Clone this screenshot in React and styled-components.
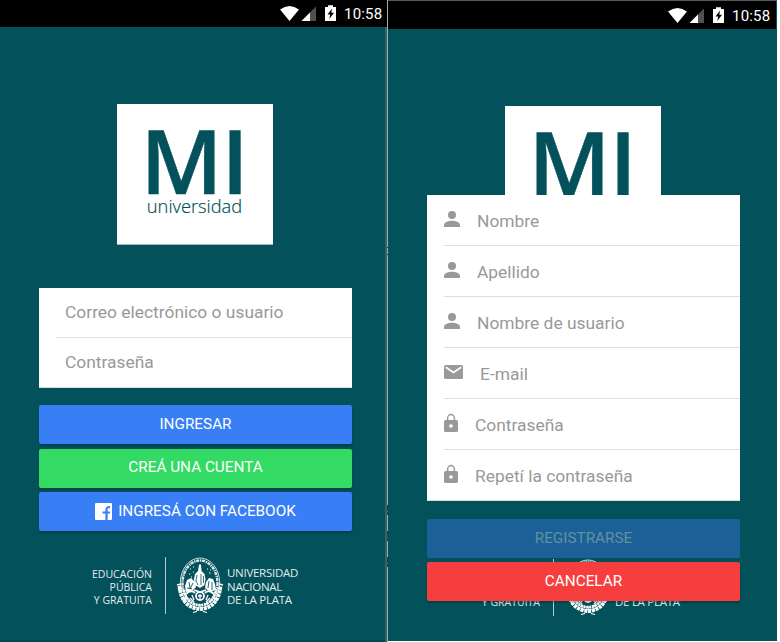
import React from "react";
import styled, { createGlobalStyle, css } from "styled-components";

const TEAL = "#03515a";

const GlobalStyle = createGlobalStyle`
  * { box-sizing: border-box; }
  body { margin: 0; background: #fff; font-family: Roboto, "Liberation Sans", sans-serif; overflow: hidden; }
`;

const Board = styled.main`
  display: grid;
  grid-template-columns: 385px 3px 389px;
  width: 777px;
  height: 642px;
  background: ${TEAL};
`;

const Phone = styled.section`
  display: grid;
  grid-template-rows: 27px 1fr;
  height: ${(p) => (p.$framed ? 641 : 642)}px;
  min-width: 0;
  background: ${TEAL};
  ${(p) =>
    p.$framed
      ? css`
          border-top: 1px solid #55595a;
          grid-template-rows: 28px 1fr;
          box-shadow: 0 1px #fff;
        `
      : css`
          border-bottom: 2px solid #06454d;
        `}
`;

const Divider = styled.div`
  display: grid;
  grid-template-columns: 2px 1px;
  background: linear-gradient(#000 27px, #34656b 27px);
`;

const DividerLine = styled.svg`
  grid-column: 2;
  width: 1px;
  height: 642px;
`;

const StatusBar = styled.header`
  display: flex;
  justify-content: flex-end;
  align-items: ${(p) => (p.$framed ? "flex-end" : "flex-start")};
  width: 388px;
  padding-right: 6px;
  background: #000;
`;

const StatusIcons = styled.svg`
  width: 60px;
  height: 27px;
`;

const Clock = styled.time`
  width: 42px;
  padding: 1px 0 0 4px;
  color: #fff;
  font-size: 15px;
  line-height: 27px;
  height: 27px;
  white-space: nowrap;
  letter-spacing: 0.2px;
`;

const Screen = styled.div`
  display: grid;
  grid-template-areas: "stack";
  grid-template-columns: 388px;
  min-height: 0;
`;

const Backdrop = styled.div`
  grid-area: stack;
  display: flex;
  flex-direction: column;
  align-items: center;
  padding-top: 77px;
  padding-right: 1px;
`;

const Logo = styled.div`
  display: flex;
  flex-direction: column;
  align-items: center;
  width: 156px;
  height: 141px;
  margin-left: 3px;
  border-bottom: 1px solid #9bb9bd;
  background: #fff;
  color: ${TEAL};
  font-family: "Open Sans", sans-serif;
`;

const LogoMark = styled.div`
  height: 91px;
  margin-right: 2px;
  font-size: 89px;
  font-weight: 600;
  line-height: 112px;
  letter-spacing: -1px;
  -webkit-text-stroke: 0.5px ${TEAL};
`;

const LogoName = styled.div`
  font-size: 18.3px;
  font-weight: 300;
  line-height: 22px;
  margin-right: 1px;
  -webkit-text-stroke: 0.2px ${TEAL};
`;

const Sponsor = styled.footer`
  display: flex;
  align-items: flex-start;
  margin-top: 312px;
  margin-left: 1px;
  color: #e2eced;
`;

const Slogan = styled.p`
  width: 63px;
  margin: 11px 13px 0 0;
  font: 400 10.5px/13px "Open Sans", sans-serif;
  text-align: right;
  white-space: nowrap;
`;

const Rule = styled.span`
  width: 1px;
  height: 57px;
  background: #b4cbce;
`;

const Seal = styled.svg`
  width: 48px;
  height: 58px;
  margin-left: 10px;
`;

const University = styled.p`
  width: 72px;
  margin: 9px 0 0 3px;
  font: 400 11.5px/13.5px "Open Sans", sans-serif;
  letter-spacing: -0.28px;
  white-space: nowrap;
`;

const Form = styled.form`
  grid-area: stack;
  z-index: 1;
  width: 313px;
  height: max-content;
  margin: ${(p) => p.$top}px 0 0 39px;
`;

const Fields = styled.div`
  padding-left: 17px;
  background: #fff;
  box-shadow: inset 0 -1px #d5dcdd;
`;

const Actions = styled.div`
  display: grid;
  gap: ${(p) => p.$gap}px;
  padding-top: ${(p) => p.$top}px;
`;

const Field = styled.label`
  display: flex;
  align-items: center;
  height: ${(p) => p.$height}px;
  padding-left: ${(p) => p.$indent}px;
  padding-top: ${(p) => (p.$indent ? 0 : 2)}px;
  padding-bottom: ${(p) => (p.$indent ? 2 : 0)}px;
  color: #999;
  font-size: 17.4px;
  border-bottom: 1px solid #dedede;
`;

const FieldIcon = styled.svg`
  flex: none;
  width: ${(p) => p.$width}px;
  height: 22px;
  margin: 0 ${(p) => p.$gap}px 4px 0;
  fill: #999;
`;

const Button = styled.button`
  display: flex;
  align-items: center;
  justify-content: center;
  width: 100%;
  height: 39px;
  padding: 0 0 2px;
  border: 0;
  border-radius: 2px;
  background: ${(p) => p.$color};
  color: ${(p) => p.$ink || "#fff"};
  font: 400 15.3px Roboto, sans-serif;
  box-shadow: ${(p) => (p.disabled ? "none" : "0 2px 2px rgba(0, 0, 0, 0.22)")};
`;

const FacebookIcon = styled.svg`
  width: 17px;
  height: 17px;
  margin: 1px 6px 0 0;
`;

const SHAPES = {
  person: (
    <>
      <circle cx="8" cy="7" r="4" />
      <path d="M0 19v-2c0-3 5-4.300 8-4.300s8 1.300 8 4.300v2z" />
    </>
  ),
  mail: (
    <>
      <rect y="4" width="19" height="14" rx="1.5" />
      <path d="M1.800 6.200l7.700 5.200 7.700-5.200" fill="none" stroke="#fff" strokeWidth="1.7" />
    </>
  ),
  lock: (
    <>
      <path d="M3.600 9V6.200a3.400 3.600 0 0 1 6.800 0V9" fill="none" stroke="#999" strokeWidth="1.5" />
      <rect y="8" width="14" height="12" rx="1.6" />
      <circle cx="7" cy="14" r="1.8" fill="#fff" />
    </>
  ),
};

const ICON_SIZES = { person: [17, 16], mail: [19, 17], lock: [14, 17] };

function Status({ framed }) {
  return (
    <StatusBar $framed={framed}>
      <StatusIcons viewBox="0 0 60 27">
        <path d="M0 9.600Q9.500 2.400 19 9.600L9.500 21z" fill="#fff" />
        <path d="M21.500 21L36 6.500V21z" fill="#505050" />
        <path d="M21.500 21L30 12.500V21z" fill="#fff" />
        <path d="M45 7h3V5.300h5V7h3v14H45z" fill="#fff" />
        <path d="M52 8.500l-4.500 6h2.700l-.9 4.500 4.700-6.200h-2.700z" fill="#000" />
      </StatusIcons>
      <Clock>10:58</Clock>
    </StatusBar>
  );
}

function UniversitySeal() {
  return (
    <Seal viewBox="0 0 48 58" fill="none" stroke="#fff">
      <ellipse cx="24" cy="26" rx="17.500" ry="22.500" strokeWidth="2.500" strokeDasharray="3.200 .8 1.300 .7" strokeOpacity=".85" />
      <ellipse cx="24" cy="26" rx="19.700" ry="25" strokeWidth=".8" />
      <path d="M3.500 29C5 46 15 52 24 52s19-6 20.500-23" strokeWidth="3.800" strokeDasharray="3 .8" />
      <path d="M8 33c2 11 9 15 16 15s14-4 16-15" strokeWidth="2.600" strokeDasharray="1.800 1" />
      <path d="M1 28l4-1M2 33l5-2M4 39l4-3M7 44l4-4M47 28l-4-1M46 33l-5-2M44 39l-4-3M41 44l-4-4" strokeWidth="1.300" />
      <path d="M23 8l1-1 1 1 .5 6 3 3 1 5-1 6-4.500 3-5-3-1-6 1-5 3-3z" fill="#fff" stroke="none" />
      <path d="M21 18l-1 6 2 4M25 17v11M27.500 19v7" stroke={TEAL} strokeWidth=".8" />
      <path d="M11 23l4-2 4 4 1 5-4 4-6 1-1-6zM33 21l4 1 2 5 1 6-6 2-5-4 1-6z" fill="#fff" stroke="none" />
      <path d="M13 25l1 6M17 26l-3 6M33 24l-1 7M36 25v8M11 31l5 1" stroke={TEAL} strokeWidth=".9" />
      <path d="M10 37q5-5 9-1M38 37q-5-5-9-1M18 33l6 2 6-2" strokeWidth="1.800" />
      <circle cx="24" cy="39" r="4" strokeWidth="1.800" />
      <path d="M22 39h4M24 37v5M16 38l2 5M32 38l-2 5" strokeWidth="1.300" />
      <path d="M14 41l4 4M34 41l-4 4" strokeWidth="1.300" />
      <path d="M14 12h1M17 10h1M13 17h1.300M17 15h1M31 12h1M34 13h1M33 16h1.500M15 20h1" strokeWidth="1.200" />
      <path d="M17 55.500l4-1M27 54.500l4 1" strokeWidth="1.200" />
    </Seal>
  );
}

function Branding() {
  return (
    <Backdrop>
      <Logo>
        <LogoMark>MI</LogoMark>
        <LogoName>universidad</LogoName>
      </Logo>
      <Sponsor>
        <Slogan>
          EDUCACIÓN
          <br />
          PÚBLICA
          <br />Y GRATUITA
        </Slogan>
        <Rule />
        <UniversitySeal />
        <University>
          UNIVERSIDAD
          <br />
          NACIONAL
          <br />
          DE LA PLATA
        </University>
      </Sponsor>
    </Backdrop>
  );
}

function IconField({ icon, children }) {
  const [width, gap] = ICON_SIZES[icon];
  return (
    <Field $height={51} $indent={0}>
      <FieldIcon $width={width} $gap={gap} viewBox={`0 0 ${width} 22`}>
        {SHAPES[icon]}
      </FieldIcon>
      {children}
    </Field>
  );
}

export default function App() {
  return (
    <>
      <GlobalStyle />
      <Board>
        <Phone>
          <Status />
          <Screen>
            <Branding />
            <Form $top={261}>
              <Fields>
                <Field $height={50} $indent={9}>Correo electrónico o usuario</Field>
                <Field $height={50} $indent={9}>Contraseña</Field>
              </Fields>
              <Actions $gap={4.5} $top={17}>
                <Button type="button" $color="#387ef5">INGRESAR</Button>
                <Button type="button" $color="#33db64">CREÁ UNA CUENTA</Button>
                <Button type="button" $color="#387ef5">
                  <FacebookIcon viewBox="0 0 17 17">
                    <rect width="17" height="17" rx="1" fill="#fff" />
                    <path d="M11.500 17V6.500q0-2.500 3.500-2.300M7.500 9.500H15" fill="none" stroke="#387ef5" strokeWidth="2.200" />
                  </FacebookIcon>
                  INGRESÁ CON FACEBOOK
                </Button>
              </Actions>
            </Form>
          </Screen>
        </Phone>
        <Divider>
          <DividerLine viewBox="0 0 1 642">
            <rect width="1" height="642" fill="#9eadb0" />
            <path d="M.5 247v1M.5 254v1M.5 505v10M.5 531v10M.5 557v10" stroke="#26383c" />
            <path d="M.5 511v1M.5 537v1M.5 563v1" stroke="#7b6a40" />
          </DividerLine>
        </Divider>
        <Phone $framed>
          <Status framed />
          <Screen>
            <Branding />
            <Form $top={166}>
              <Fields>
                <IconField icon="person">Nombre</IconField>
                <IconField icon="person">Apellido</IconField>
                <IconField icon="person">Nombre de usuario</IconField>
                <IconField icon="mail">E-mail</IconField>
                <IconField icon="lock">Contraseña</IconField>
                <IconField icon="lock">Repetí la contraseña</IconField>
              </Fields>
              <Actions $gap={4} $top={18}>
                <Button type="button" disabled $color="#1b6197" $ink="#61929f">REGISTRARSE</Button>
                <Button type="button" $color="#f63e3e">CANCELAR</Button>
              </Actions>
            </Form>
          </Screen>
        </Phone>
      </Board>
    </>
  );
}
